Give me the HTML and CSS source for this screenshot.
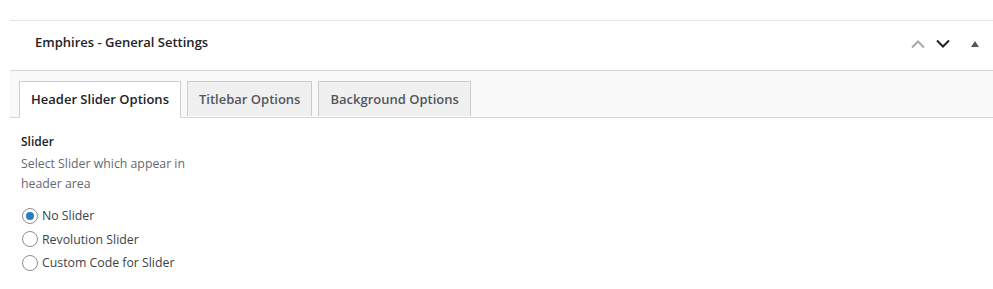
FILE: index.html
```html
<!DOCTYPE html>
<html lang="en">
<head>
    <meta charset="UTF-8">
    <title>Emphires - General Settings</title>
    <link rel="stylesheet" href="styles.css">
</head>
<body>
    <div class="postbox">
        <div class="postbox-header">
            <h2 class="postbox-title">Emphires - General Settings</h2>
            <div class="handle-actions">
                <button class="handle-btn handle-up" aria-label="Move up">
                    <svg width="16" height="10" viewBox="0 0 16 10"><path d="M2 8.5 L8 2.5 L14 8.5" fill="none" stroke="#a7aaad" stroke-width="2"/></svg>
                </button>
                <button class="handle-btn handle-down" aria-label="Move down">
                    <svg width="16" height="10" viewBox="0 0 16 10"><path d="M2 1.5 L8 7.5 L14 1.5" fill="none" stroke="#1d2327" stroke-width="2"/></svg>
                </button>
                <button class="handle-btn handle-toggle" aria-label="Toggle panel">
                    <svg width="10" height="8" viewBox="0 0 10 8"><path d="M1 7 L5 1 L9 7 Z" fill="#50575e"/></svg>
                </button>
            </div>
        </div>

        <ul class="tabs">
            <li class="tab active">Header Slider Options</li>
            <li class="tab">Titlebar Options</li>
            <li class="tab">Background Options</li>
        </ul>

        <div class="tab-panel">
            <div class="field-label">Slider</div>
            <p class="field-desc">Select Slider which appear in header area</p>
            <ul class="radio-list">
                <li><label><span class="radio checked"></span>No Slider</label></li>
                <li><label><span class="radio"></span>Revolution Slider</label></li>
                <li><label><span class="radio"></span>Custom Code for Slider</label></li>
            </ul>
        </div>
    </div>
</body>
</html>
```

FILE: styles.css
```css
body {
    margin: 0;
    background-color: #fff;
    font-family: 'Open Sans', 'Noto Sans', sans-serif;
    color: #3c434a;
}

.postbox {
    margin: 20px 0 0 10px;
    border-top: 1px solid #e2e4e7;
}

.postbox-header {
    display: flex;
    align-items: center;
    justify-content: space-between;
    height: 49px;
    border-bottom: 1px solid #d4d6d9;
}

.postbox-title {
    margin: 0 0 8px 25px;
    font-size: 13px;
    font-weight: 600;
    color: #1d2327;
}

.handle-actions {
    display: flex;
    align-items: center;
    margin: 0 8px 3px 0;
}

.handle-btn {
    border: none;
    background: none;
    padding: 0;
    width: 25px;
    height: 20px;
    display: flex;
    align-items: center;
    justify-content: center;
}

.handle-toggle {
    width: 20px;
    margin-left: 10px;
}

.tabs {
    display: flex;
    gap: 6px;
    list-style: none;
    margin: 0;
    padding: 10px 9px 0;
    background-color: #f9f9f9;
    border-bottom: 1px solid #d4d6d9;
}

.tab {
    height: 34px;
    line-height: 34px;
    padding: 0 11px;
    margin-bottom: -1px;
    background-color: #f0f0f1;
    border: 1px solid #c9ccd0;
    border-bottom: none;
    font-size: 13px;
    font-weight: 600;
    color: #50575e;
}

.tab.active {
    background-color: #fff;
    color: #1d2327;
    height: 35px;
    border-bottom: 1px solid #fff;
}

.tab-panel {
    padding: 14px 11px 10px;
}

.field-label {
    font-size: 12px;
    font-weight: 600;
    color: #1d2327;
    line-height: 20px;
}

.field-desc {
    margin: 2px 0 0;
    width: 190px;
    font-size: 12.3px;
    line-height: 20px;
    color: #646970;
}

.radio-list {
    list-style: none;
    margin: 13px 0 0;
    padding: 0;
}

.radio-list li {
    height: 23.5px;
    font-size: 12.3px;
    color: #3c434a;
}

.radio-list label {
    display: flex;
    align-items: center;
    gap: 4px;
}

.radio {
    box-sizing: border-box;
    width: 16px;
    height: 16px;
    margin-left: 1px;
    border: 1px solid #8c8f94;
    border-radius: 50%;
    background-color: #fff;
    position: relative;
}

.radio.checked::after {
    content: '';
    position: absolute;
    left: 3px;
    top: 3px;
    width: 8px;
    height: 8px;
    border-radius: 50%;
    background-color: #2a7cc7;
}
```
